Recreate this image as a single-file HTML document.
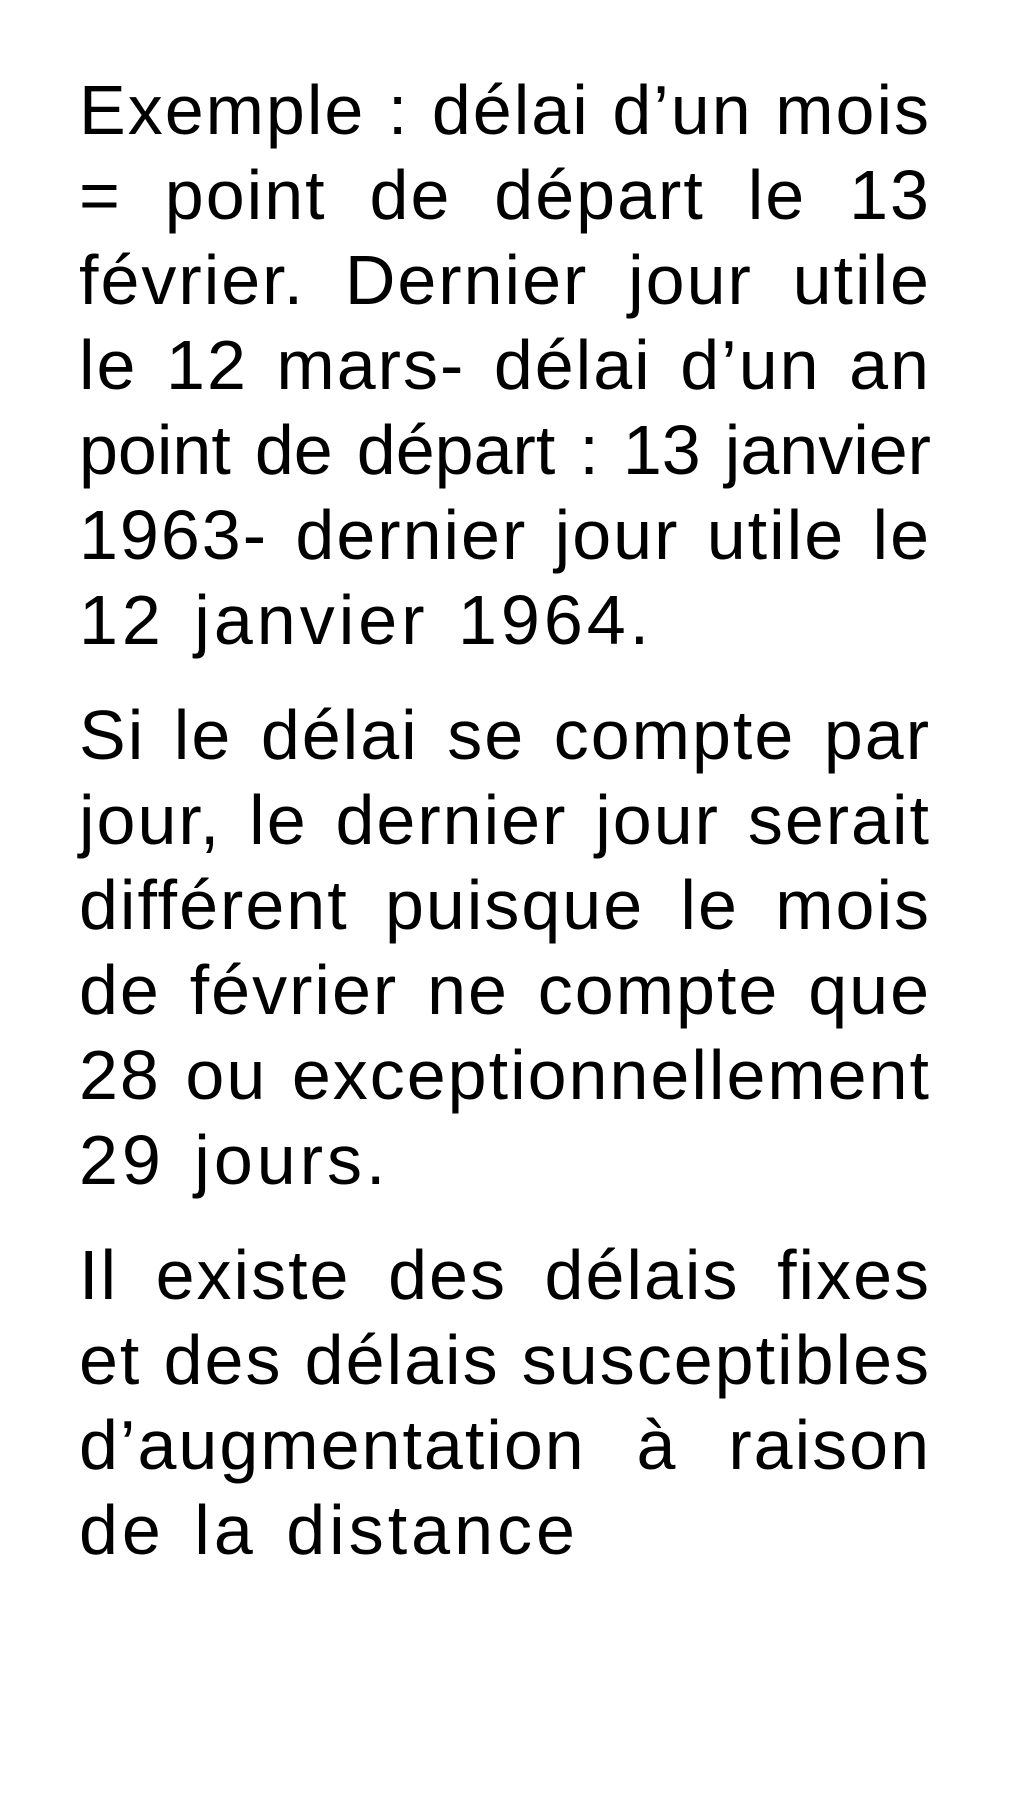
<!DOCTYPE html>
<html><head><meta charset="utf-8"><style>
html,body{margin:0;padding:0;background:#fff;}
body{width:1012px;height:1800px;overflow:hidden;font-family:"Liberation Sans",sans-serif;color:#000;}
.wrap{position:absolute;left:79px;top:68px;width:852px;font-size:70px;line-height:85px;}
.l{white-space:nowrap;text-align:justify;text-align-last:justify;height:85px;letter-spacing:2px;}
.e{text-align:left;text-align-last:left;letter-spacing:4px;word-spacing:6px;}
.t{letter-spacing:0;}
.p{margin-bottom:30px;}
</style></head><body>
<div class="wrap">
<div class="p">
<div class="l">Exemple : délai d’un mois</div>
<div class="l">= point de départ le 13</div>
<div class="l">février. Dernier jour utile</div>
<div class="l">le 12 mars- délai d’un an</div>
<div class="l t">point de départ : 13 janvier</div>
<div class="l">1963- dernier jour utile le</div>
<div class="l e">12 janvier 1964.</div>
</div>
<div class="p">
<div class="l">Si le délai se compte par</div>
<div class="l">jour, le dernier jour serait</div>
<div class="l">différent puisque le mois</div>
<div class="l">de février ne compte que</div>
<div class="l">28 ou exceptionnellement</div>
<div class="l e">29 jours.</div>
</div>
<div class="p">
<div class="l">Il existe des délais fixes</div>
<div class="l">et des délais susceptibles</div>
<div class="l">d’augmentation à raison</div>
<div class="l e">de la distance</div>
</div>
</div>
</body></html>
